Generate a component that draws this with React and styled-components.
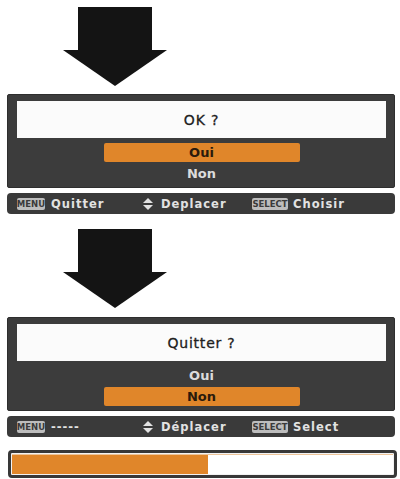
import React from 'react';
import styled, { createGlobalStyle } from 'styled-components';

const GlobalStyle = createGlobalStyle`
    html, body {
        margin: 0;
        padding: 0;
        background: #ffffff;
    }
    body {
        font-family: "DejaVu Sans", "Liberation Sans", sans-serif;
    }
`;

const Page = styled.div`
    width: 400px;
    height: 479px;
    display: flex;
    flex-flow: column nowrap;
    padding-top: 7px;
    box-sizing: border-box;
    overflow: hidden;
`;

const ArrowWrap = styled.div`
    margin-left: 63px;
    margin-top: ${({top}) => top || 0}px;
    height: 79px;
    line-height: 0;
`;

const Panel = styled.div`
    margin: ${({top}) => top}px 0 0 7px;
    width: 388px;
    box-sizing: border-box;
    background: #3c3c3c;
    border: 1px solid #2e2e2e;
    border-radius: 2px;
    padding: 6px 8px 4px 9px;
    display: flex;
    flex-flow: column nowrap;
    gap: 2px;
`;

const Question = styled.div`
    height: 37px;
    margin-bottom: 3px;
    background: #fbfbfb;
    display: flex;
    align-items: center;
    justify-content: center;
    font-size: 14px;
    letter-spacing: 0.8px;
    color: #202020;
    font-weight: normal;
    -webkit-text-stroke: 0.3px #202020;
`;

const Option = styled.div`
    width: 196px;
    height: 19px;
    align-self: center;
    border-radius: 2px;
    background: ${({selected}) => selected ? '#e0862a' : 'transparent'};
    color: ${({selected}) => selected ? '#2a1a0c' : '#dcdcdc'};
    display: flex;
    align-items: center;
    justify-content: center;
    font-size: 13px;
    font-weight: bold;
`;

const StatusBar = styled.div`
    margin: 5px 0 0 7px;
    width: 388px;
    height: 21px;
    box-sizing: border-box;
    background: #3a3a3a;
    border-radius: 4px;
    padding-left: 10px;
    display: grid;
    grid-template-columns: 126px 109px 1fr;
    align-items: center;
    color: #e2e2e2;
    font-size: 11.5px;
    font-weight: bold;
    letter-spacing: 1px;
`;

const Hint = styled.div`
    display: flex;
    align-items: center;
    gap: ${({gap}) => gap || 6}px;
    white-space: nowrap;
`;

const Key = styled.span`
    display: inline-flex;
    align-items: center;
    justify-content: center;
    width: ${({w}) => w}px;
    height: 12px;
    background: #bdbdbd;
    border-radius: 2px;
    color: #3a3a3a;
    font-size: 8.5px;
    font-weight: bold;
    letter-spacing: 0;
`;

const Progress = styled.div`
    margin: 13px 0 0 8px;
    width: 389px;
    height: 28px;
    box-sizing: border-box;
    border: 3px solid #383838;
    border-radius: 4px;
    padding: 1px;
    background: #f2f2f2;
`;

const Track = styled.div`
    height: 100%;
    background: #ffffff;
    border-top: 1px solid #edc59a;
    box-sizing: border-box;
`;

const Fill = styled.div`
    height: 100%;
    background: #e0862a;
`;

const DownArrow = ({top}) => (
    <ArrowWrap top={top}>
        <svg width="104" height="79" viewBox="0 0 104 79">
            <rect x="15" y="0" width="74" height="44" fill="#141414" />
            <polygon points="0,43 104,43 52,79" fill="#141414" />
        </svg>
    </ArrowWrap>
);

const UpDown = () => (
    <svg width="10" height="12" viewBox="0 0 10 12">
        <polygon points="5,0 10,5 0,5" fill="#e2e2e2" />
        <polygon points="0,7 10,7 5,12" fill="#e2e2e2" />
    </svg>
);

const Dialog = ({top, question, selected}) => (
    <Panel top={top}>
        <Question>{question}</Question>
        <Option selected={selected === 0}>Oui</Option>
        <Option selected={selected === 1}>Non</Option>
    </Panel>
);

const Footer = ({left, move, right}) => (
    <StatusBar>
        <Hint><Key w={28}>MENU</Key>{left}</Hint>
        <Hint gap={8}><UpDown />{move}</Hint>
        <Hint gap={5}><Key w={36}>SELECT</Key>{right}</Hint>
    </StatusBar>
);

export default function App() {
    const progress = 51.5;

    return (
        <Page>
            <GlobalStyle />
            <DownArrow />
            <Dialog top={8} question="OK ?" selected={0} />
            <Footer left="Quitter" move="Deplacer" right="Choisir" />
            <DownArrow top={15} />
            <Dialog top={9} question="Quitter ?" selected={1} />
            <Footer left="-----" move="Déplacer" right="Select" />
            <Progress>
                <Track>
                    <Fill style={{width: `${progress}%`}} />
                </Track>
            </Progress>
        </Page>
    );
}
